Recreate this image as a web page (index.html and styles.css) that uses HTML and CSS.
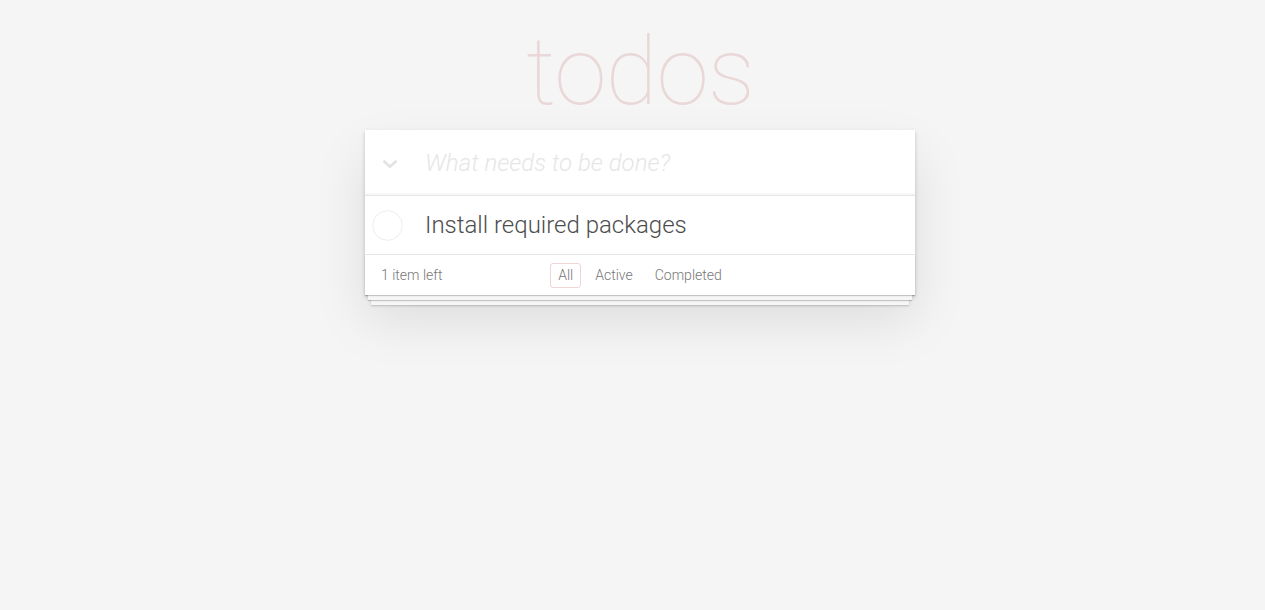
FILE: index.html
```html
<!DOCTYPE html>
<html lang="en">
<head>
<meta charset="utf-8">
<title>todos</title>
<link rel="stylesheet" href="styles.css">
</head>
<body>
<div class="page">
  <h1 class="title">todos</h1>
  <section class="todoapp">
    <header class="header">
      <span class="toggle-all">
        <svg width="16" height="10" viewBox="0 0 16 10"><path d="M1.5 1.8 L8 7.8 L14.5 1.8" fill="none" stroke="#e3e3e3" stroke-width="2.6" stroke-linejoin="miter"/></svg>
      </span>
      <input class="new-todo" placeholder="What needs to be done?">
    </header>
    <section class="main">
      <ul class="todo-list">
        <li class="todo">
          <span class="toggle">
            <svg width="31" height="31" viewBox="0 0 31 31"><circle cx="15.5" cy="15.5" r="14.8" fill="none" stroke="#ededed" stroke-width="1"/></svg>
          </span>
          <label class="todo-label">Install required packages</label>
        </li>
      </ul>
    </section>
    <footer class="footer">
      <span class="todo-count">1 item left</span>
      <ul class="filters">
        <li><a class="filter selected" href="#/">All</a></li>
        <li><a class="filter" href="#/active">Active</a></li>
        <li><a class="filter" href="#/completed">Completed</a></li>
      </ul>
      <span class="spacer"></span>
    </footer>
  </section>
</div>
</body>
</html>
```

FILE: styles.css
```css
html, body {
  margin: 0;
  padding: 0;
}
html {
  background: #f5f5f5;
}
body {
  min-height: 610px;
  background: #f5f5f5;
  font-family: "Helvetica Neue", Roboto, "Liberation Sans", Arial, sans-serif;
  font-size: 14px;
  line-height: 1.4em;
  color: #4d4d4d;
  font-weight: 300;
}
.page {
  width: 550px;
  margin: 0 0 0 365px;
  padding-bottom: 40px;
}
.title {
  margin: 0;
  height: 130px;
  box-sizing: border-box;
  padding-top: 22px;
  font-size: 95px;
  line-height: 100px;
  letter-spacing: -1px;
  font-weight: 100;
  text-align: center;
  color: rgba(175, 47, 47, 0.15);
}
.todoapp {
  background: #fff;
  box-shadow: 0 2px 4px 0 rgba(0, 0, 0, 0.2), 0 25px 50px 0 rgba(0, 0, 0, 0.1);
}
.header {
  display: flex;
  align-items: center;
  height: 65px;
  box-shadow: inset 0 -2px 1px rgba(0, 0, 0, 0.03);
}
.toggle-all {
  width: 49px;
  display: flex;
  justify-content: center;
  padding-top: 3px;
}
.new-todo {
  flex: 1;
  border: none;
  outline: none;
  background: transparent;
  padding: 17px 16px 15px 11px;
  font-family: inherit;
  font-size: 24px;
  line-height: 1.4em;
  font-weight: 300;
  color: inherit;
}
.new-todo::placeholder {
  font-style: italic;
  font-weight: 300;
  color: #e6e6e6;
}
.main {
  border-top: 1px solid #e6e6e6;
}
.todo-list {
  margin: 0;
  padding: 0;
  list-style: none;
}
.todo {
  display: flex;
  align-items: center;
  font-size: 24px;
}
.toggle {
  width: 60px;
  box-sizing: border-box;
  padding-left: 7px;
  display: flex;
  padding-top: 1px;
}
.todo-label {
  padding: 15px 15px 15px 0;
  line-height: 28px;
  color: #4d4d4d;
  font-weight: 300;
}
.footer {
  display: grid;
  grid-template-columns: 1fr auto 1fr;
  align-items: center;
  height: 20px;
  padding: 10px 15px;
  line-height: 20px;
  color: #777;
  border-top: 1px solid #e6e6e6;
  box-shadow: 0 1px 1px rgba(0, 0, 0, 0.2), 0 8px 0 -3px #f6f6f6, 0 9px 1px -3px rgba(0, 0, 0, 0.2), 0 16px 0 -6px #f6f6f6, 0 17px 2px -6px rgba(0, 0, 0, 0.2);
}
.todo-count {
  padding-left: 1px;
}
.filters {
  margin: 0;
  padding: 0;
  list-style: none;
  display: flex;
}
.filter {
  display: inline-block;
  color: inherit;
  margin: -2.5px 3px;
  padding: 2px 7px;
  line-height: 19px;
  text-decoration: none;
  border: 1px solid transparent;
  border-radius: 3px;
}
.filter.selected {
  border-color: rgba(175, 47, 47, 0.2);
}
```
